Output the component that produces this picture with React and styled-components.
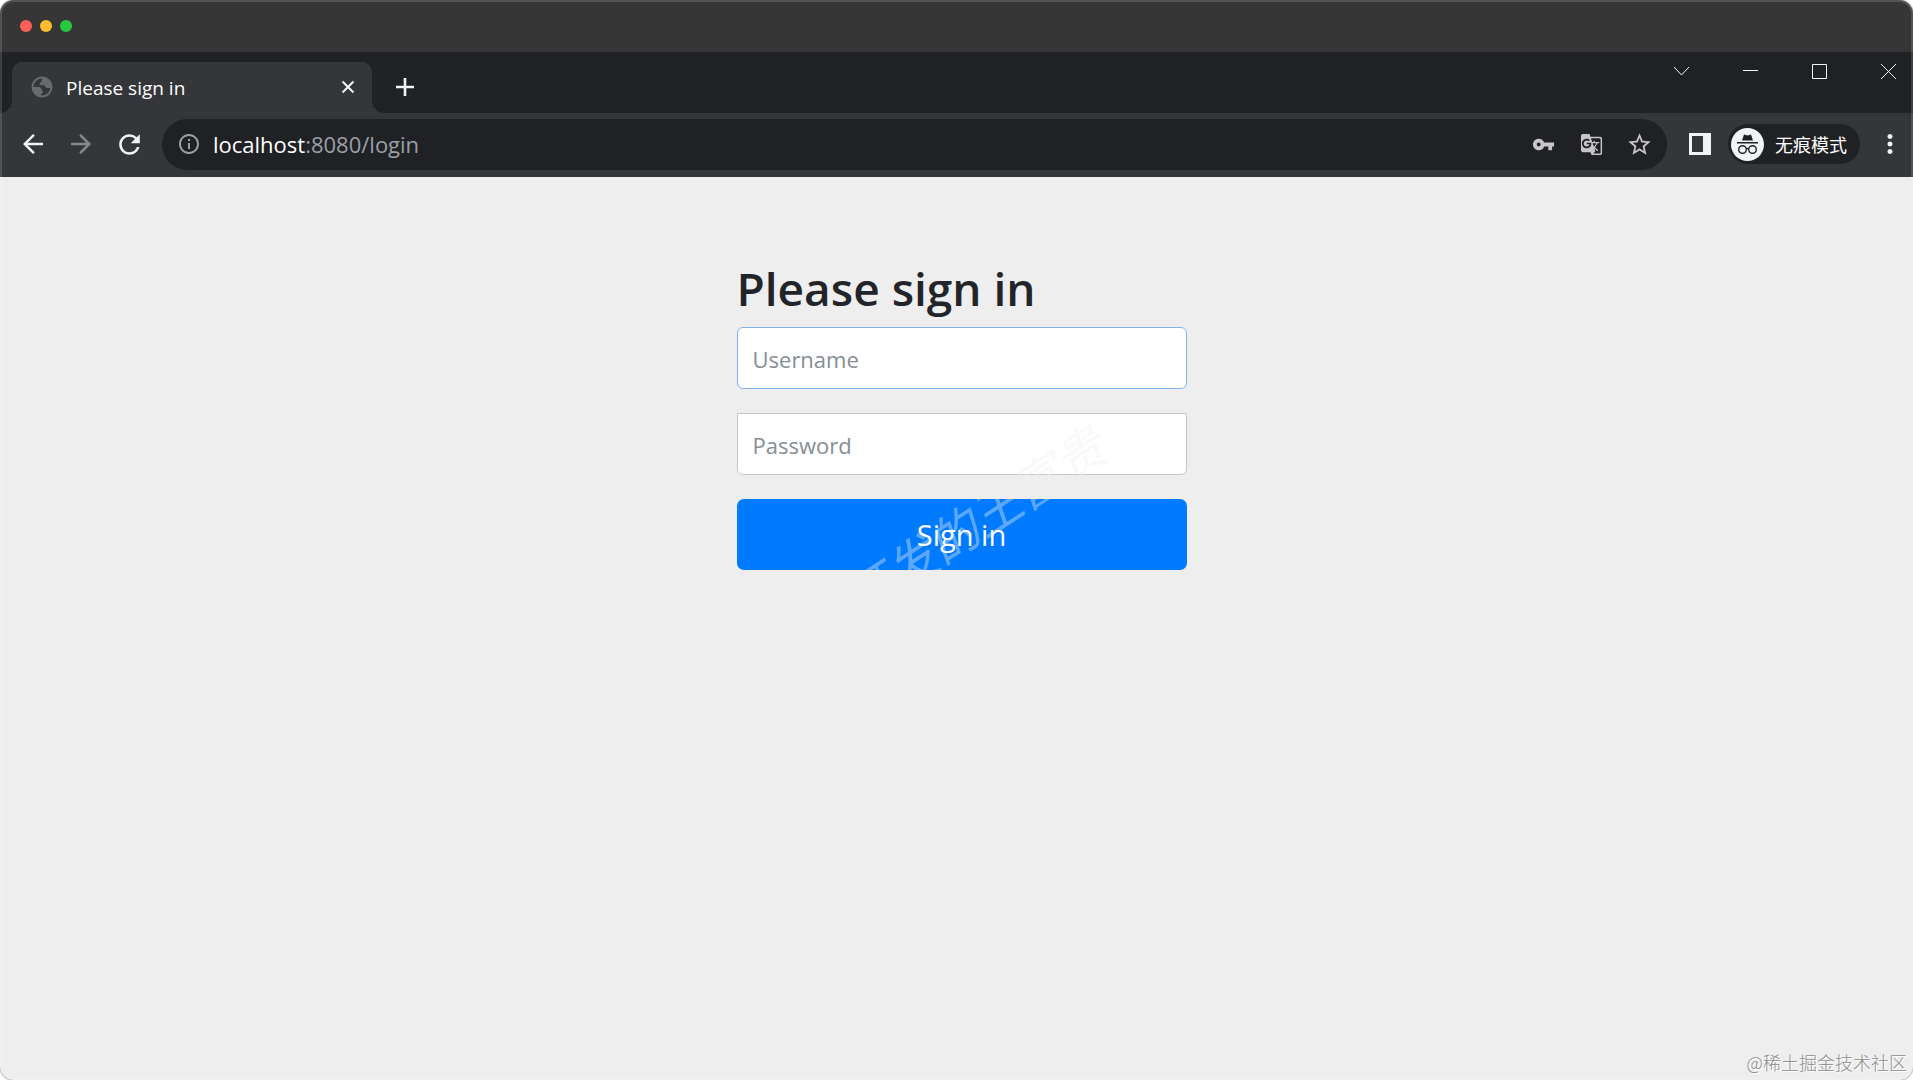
import React from 'react';
import styled, { createGlobalStyle } from 'styled-components';
import { MdVpnKey, MdStarBorder, MdArrowBack, MdArrowForward, MdRefresh, MdInfoOutline, MdGTranslate, MdMoreVert } from 'react-icons/md';

const GlobalStyle = createGlobalStyle`
  * {
    box-sizing: border-box;
  }

  body {
    margin: 0;
    background: #ffffff;
    font-family: 'Open Sans', 'Noto Sans CJK SC', sans-serif;
  }

  button,
  input {
    font-family: inherit;
  }
`;

const Window = styled.div`
  position: relative;
  display: flex;
  flex-direction: column;
  min-height: 100vh;
  overflow: hidden;
  border-radius: 14px;
  background: #eeeeee;
  box-shadow: 0 0 2px #555555;

  &::after {
    content: '';
    position: absolute;
    inset: 0;
    border: 2px solid rgba(255, 255, 255, 0.14);
    border-radius: 14px;
    pointer-events: none;
  }
`;

const TitleBar = styled.div`
  display: flex;
  align-items: center;
  gap: 8px;
  height: 52px;
  padding: 0 20px;
  background: #363636;
`;

const Dot = styled.span`
  width: 12px;
  height: 12px;
  border-radius: 50%;
  background: ${({ color }) => color};
`;

const TabStrip = styled.div`
  display: flex;
  height: 61px;
  padding-left: 12px;
  background: #202124;
`;

const Tab = styled.div`
  position: relative;
  display: flex;
  align-items: center;
  width: 360px;
  margin-top: 10px;
  padding: 0 12px 2px 19px;
  border-radius: 10px 10px 0 0;
  background: #35363a;

  &::before,
  &::after {
    content: '';
    position: absolute;
    bottom: 0;
    width: 12px;
    height: 12px;
  }

  &::before {
    left: -12px;
    background: radial-gradient(circle at 0 0, #202124 12px, #35363a 12px);
  }

  &::after {
    right: -12px;
    background: radial-gradient(circle at 100% 0, #202124 12px, #35363a 12px);
  }
`;

const TabTitle = styled.span`
  flex: 1;
  margin-left: 13px;
  padding-top: 2px;
  color: #ffffff;
  font-size: 19px;
`;

const IconButton = styled.button`
  display: flex;
  align-items: center;
  justify-content: center;
  width: 24px;
  height: 24px;
  padding: 0;
  border: 0;
  background: none;
  color: ${({ color }) => color || '#f1f3f4'};

  svg {
    flex-shrink: 0;
  }
`;

const NewTab = styled(IconButton)`
  align-self: center;
  margin: 8px 0 0 21px;
`;

const WindowControls = styled.div`
  display: flex;
  align-items: center;
  gap: 45px;
  height: 38px;
  margin-left: auto;
  padding-right: 13px;
`;

const ToolBar = styled.div`
  display: flex;
  align-items: center;
  height: 64px;
  padding: 0 11px 2px 21px;
  background: #35363a;
`;

const NavButtons = styled.div`
  display: flex;
  gap: 24px;
  margin-right: 21px;
`;

const AddressBar = styled.div`
  display: flex;
  flex: 1;
  align-items: center;
  height: 51px;
  margin-right: 21px;
  padding: 0 16px 0 15px;
  border-radius: 26px;
  background: #202124;
`;

const Address = styled.div`
  flex: 1;
  margin-left: 12px;
  color: #9aa0a6;
  font-size: 22px;
`;

const Host = styled.span`
  color: #ffffff;
`;

const AddressActions = styled.div`
  display: flex;
  gap: 24px;
`;

const Incognito = styled.div`
  display: flex;
  align-items: center;
  gap: 11px;
  height: 40px;
  margin: 0 18px 0 16px;
  padding: 0 13px 0 3px;
  border-radius: 20px;
  background: #202124;
  color: #ffffff;
  font-family: 'Noto Sans CJK SC', sans-serif;
  font-size: 18px;
`;

const Page = styled.main`
  display: flex;
  flex: 1;
  flex-direction: column;
  align-items: center;
  padding: 82px 0 0 10px;
`;

const Form = styled.form`
  position: relative;
  display: flex;
  flex-direction: column;
  width: 450px;
  max-width: 100%;
`;

const Heading = styled.h2`
  margin: 0 0 10px;
  color: #212529;
  font-size: 46px;
  font-weight: 600;
  line-height: 58px;
`;

const Field = styled.input`
  height: 62px;
  margin-bottom: 24px;
  padding: 2px 15px 0;
  border: 1px solid ${({ $active }) => ($active ? '#80b3ee' : '#c6c8ca')};
  border-radius: ${({ $active }) => ($active ? '6px' : '0 0 6px 6px')};
  background: #ffffff;
  font-size: 22px;
  outline: 0;

  &::placeholder {
    color: #868e96;
    opacity: 1;
  }
`;

const SubmitButton = styled.button`
  height: 71px;
  border: 0;
  border-radius: 7px;
  background: #007bff;
  color: #ffffff;
  font-size: 29px;
`;

const Watermark = styled.span`
  position: absolute;
  top: 236px;
  left: 86px;
  color: rgba(238, 238, 238, 0.38);
  font-family: 'Noto Sans CJK SC', sans-serif;
  font-size: 50px;
  font-style: italic;
  line-height: 50px;
  white-space: nowrap;
  transform: rotate(-33deg);
  pointer-events: none;
`;

const Credit = styled.span`
  position: absolute;
  right: 6px;
  bottom: 6px;
  color: #8c8c8c;
  font-family: 'Noto Sans CJK SC', sans-serif;
  font-size: 18px;
  font-weight: 300;
  line-height: 24px;
  text-shadow: 1px 1px 0 #ffffff;
`;

const GlobeIcon = () => (
  <svg width="22" height="22" viewBox="0 0 22 22">
    <circle cx="11" cy="11" r="9.5" fill="none" stroke="#696a6e" strokeWidth="2" />
    <path
      d="M11.500 2c-1 2 0 3-2 4.500-1 .8-1 2-.2 2.500 1.500 1 3-.5 4 .5s1 2.500 3 2.500h4.200C21 6.500 17 1.500 11.500 2zM1.500 11h6c2 0 3 1 3 2.500s1.500 1 1.500 2.500-2 1.500-2 3v1.500C5.500 20.500 1.500 16.500 1.500 11z"
      fill="#696a6e"
    />
  </svg>
);

const CloseIcon = () => (
  <svg width="14" height="14" viewBox="0 0 14 14" stroke="currentColor" strokeWidth="2">
    <path d="M1.500 1.500l11 11M12.500 1.500l-11 11" />
  </svg>
);

const PlusIcon = () => (
  <svg width="18" height="18" viewBox="0 0 18 18" stroke="currentColor" strokeWidth="2.600">
    <path d="M9 0v18M0 9h18" />
  </svg>
);

const SidePanelIcon = () => (
  <svg width="22" height="22" viewBox="0 0 22 22">
    <path d="M0 0h22v22H0zM3 3v16h11V3z" fill="#f1f3f4" fillRule="evenodd" />
  </svg>
);

const IncognitoIcon = () => (
  <svg width="33" height="33" viewBox="0 0 33 33">
    <circle cx="16.500" cy="16.500" r="16.500" fill="#f1f3f4" />
    <path d="M11 12.500l2-6 3.500 1 3.500-1 2 6zM6 14h21v1.500H6z" fill="#202124" />
    <g fill="none" stroke="#202124" strokeWidth="1.400">
      <circle cx="11.500" cy="21.500" r="3.800" />
      <circle cx="21.500" cy="21.500" r="3.800" />
      <path d="M15.300 21q1.200-1 2.400 0" />
    </g>
  </svg>
);

const controls = [
  { label: 'Search tabs', path: 'M1 4l7.500 8L16 4' },
  { label: 'Minimize', path: 'M1 7.500h15' },
  { label: 'Maximize', path: 'M1.500 1.500h14v14h-14z' },
  { label: 'Close', path: 'M1 1l15 15M16 1L1 16' },
];

const App = () => {
  return (
    <>
      <GlobalStyle />
      <Window>
        <TitleBar>
          <Dot color="#ff5f57" />
          <Dot color="#febc2e" />
          <Dot color="#28c840" />
        </TitleBar>

        <TabStrip>
          <Tab>
            <GlobeIcon />
            <TabTitle>Please sign in</TabTitle>
            <IconButton aria-label="Close tab">
              <CloseIcon />
            </IconButton>
          </Tab>
          <NewTab aria-label="New tab">
            <PlusIcon />
          </NewTab>
          <WindowControls>
            {controls.map(({ label, path }) => (
              <IconButton key={label} aria-label={label}>
                <svg width="17" height="17" viewBox="0 0 17 17" fill="none" stroke="currentColor">
                  <path d={path} />
                </svg>
              </IconButton>
            ))}
          </WindowControls>
        </TabStrip>

        <ToolBar>
          <NavButtons>
            <IconButton aria-label="Back">
              <MdArrowBack size={30} />
            </IconButton>
            <IconButton aria-label="Forward" color="#87888b">
              <MdArrowForward size={30} />
            </IconButton>
            <IconButton aria-label="Reload">
              <MdRefresh size={31} />
            </IconButton>
          </NavButtons>
          <AddressBar>
            <MdInfoOutline size={24} color="#9aa0a6" />
            <Address>
              <Host>localhost</Host>:8080/login
            </Address>
            <AddressActions>
              <IconButton aria-label="Passwords" color="#c6c6c8">
                <MdVpnKey size={23} />
              </IconButton>
              <IconButton aria-label="Translate" color="#c6c6c8">
                <MdGTranslate size={23} />
              </IconButton>
              <IconButton aria-label="Bookmark" color="#c6c6c8">
                <MdStarBorder size={27} />
              </IconButton>
            </AddressActions>
          </AddressBar>
          <IconButton aria-label="Side panel">
            <SidePanelIcon />
          </IconButton>
          <Incognito>
            <IncognitoIcon />
            无痕模式
          </Incognito>
          <IconButton aria-label="Menu">
            <MdMoreVert size={30} />
          </IconButton>
        </ToolBar>

        <Page>
          <Form>
            <Heading>Please sign in</Heading>
            <Field type="text" placeholder="Username" aria-label="Username" $active />
            <Field type="password" placeholder="Password" aria-label="Password" />
            <SubmitButton type="button">Sign in</SubmitButton>
            <Watermark>开发的王富贵</Watermark>
          </Form>
        </Page>
        <Credit>@稀土掘金技术社区</Credit>
      </Window>
    </>
  );
};

export default App;
